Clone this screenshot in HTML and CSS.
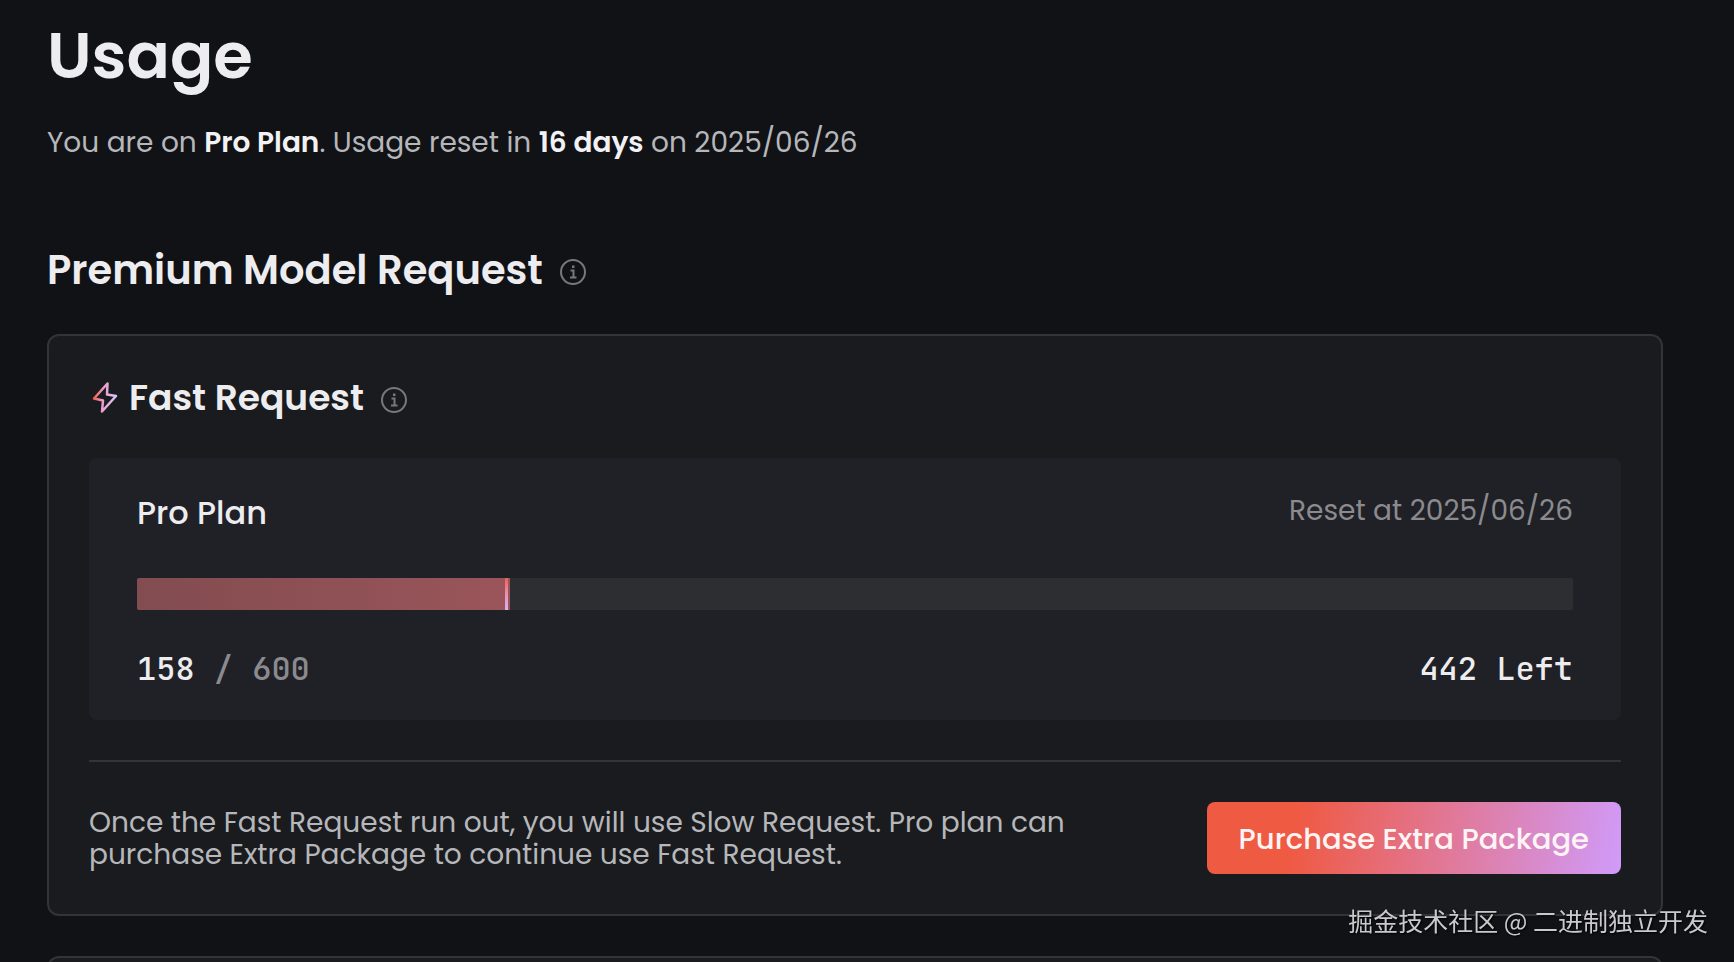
FILE: index.html
```
<!DOCTYPE html>
<html lang="en">
<head>
	<meta charset="utf-8">
	<meta name="viewport" content="width=device-width, initial-scale=1">
	<title>Usage</title>
	<link rel="stylesheet" href="styles.css">
</head>
<body>
	<main class="page">
		<h1 class="title">Usage</h1>
		<p class="summary">You are on <strong>Pro Plan</strong>. Usage reset in <strong>16 days</strong> on 2025/06/26</p>

		<div class="section-head">
			<h2>Premium Model Request</h2>
			<svg class="info" viewBox="0 0 28 28" aria-hidden="true">
				<circle cx="14" cy="14" r="12"/>
				<path d="M11.5 12.5h3v6.500M11 19.500h6.500"/>
				<path class="dot" d="M13 7.500h2.500v2.500H13z"/>
			</svg>
		</div>

		<section class="card">
			<div class="card-head">
				<svg class="bolt" viewBox="0 0 32 40" aria-hidden="true">
					<defs>
						<linearGradient id="bolt-color" x1="0" y1="0.4" x2="1" y2="0.5">
							<stop offset="0" stop-color="#f2604a"/>
							<stop offset="0.4" stop-color="#ea9ccb"/>
							<stop offset="1" stop-color="#d9c6fa"/>
						</linearGradient>
					</defs>
					<path d="M18.500 5.500L5 20.500L14 22.500L13 33.500L27 18L18 16.500Z"/>
				</svg>
				<h3>Fast Request</h3>
				<svg class="info" viewBox="0 0 28 28" aria-hidden="true">
					<circle cx="14" cy="14" r="12"/>
					<path d="M11.5 12.5h3v6.500M11 19.500h6.500"/>
					<path class="dot" d="M13 7.500h2.500v2.500H13z"/>
				</svg>
			</div>

			<div class="plan">
				<div class="row">
					<h4>Pro Plan</h4>
					<span class="reset">Reset at 2025/06/26</span>
				</div>
				<div class="bar">
					<div class="bar-fill" style="width: 26%"></div>
				</div>
				<div class="row count">
					<span>158 <span class="total">/ 600</span></span>
					<span>442 Left</span>
				</div>
			</div>

			<div class="card-foot">
				<p>Once the Fast Request run out, you will use Slow Request. Pro plan can purchase Extra Package to continue use Fast Request.</p>
				<button type="button" class="buy">Purchase Extra Package</button>
			</div>
		</section>

		<section class="card"></section>
	</main>
	<div class="watermark" lang="zh">掘金技术社区 @ 二进制独立开发</div>
</body>
</html>
```
FILE: styles.css
```
* {
	box-sizing: border-box;
}
html {
	height: 100%;
	overflow: hidden;
}
body {
	height: 100%;
	margin: 0;
	overflow: hidden;
	background: #111216;
	color: #ededf0;
	font-family: Poppins, Inter, "Noto Sans CJK SC", sans-serif;
	font-size: 28px;
	line-height: 42px;
}
h1, h2, h3, h4, p {
	margin: 0;
}
.page {
	padding: 16px 71px 0 47px;
}

/* headings */
.title {
	font-size: 64px;
	font-weight: 600;
	line-height: 80px;
}
.summary {
	margin-top: 26px;
	color: #b6b7bb;
}
.summary strong {
	color: #f2f2f5;
	font-weight: 600;
}
.section-head,
.card-head {
	display: flex;
	align-items: center;
}
.section-head {
	margin: 82px 0 40px;
}
.section-head h2 {
	font-size: 40px;
	font-weight: 600;
	line-height: 48px;
}
.info {
	width: 28px;
	height: 28px;
	margin: 3px 0 0 16px;
	fill: none;
	stroke: #77787b;
	stroke-width: 2;
}
.info .dot {
	fill: #77787b;
	stroke: none;
}

/* cards */
.card {
	margin-bottom: 40px;
	padding: 40px;
	border: 2px solid #333437;
	border-radius: 12px;
	background: #1a1b1e;
}
.card-head h3 {
	font-size: 36px;
	font-weight: 600;
	line-height: 44px;
}
.bolt {
	width: 32px;
	height: 40px;
	margin-right: 8px;
	fill: none;
	stroke: url(#bolt-color);
	stroke-width: 2.5;
	stroke-linejoin: round;
}
.plan {
	margin: 38px 0 40px;
	padding: 32px 48px;
	border-radius: 8px;
	background: #202027;
}
.row {
	display: flex;
	justify-content: space-between;
	align-items: flex-start;
}
.row h4 {
	font-size: 32px;
	font-weight: 500;
	line-height: 46px;
}
.reset {
	color: #8b8b8e;
}
.bar {
	height: 32px;
	margin: 42px 0 40px;
	border-radius: 2px;
	background: #2d2e31;
	overflow: hidden;
}
.bar-fill {
	display: flex;
	justify-content: flex-end;
	height: 100%;
	padding-right: 2px;
	background: linear-gradient(90deg, #824c50, #9a555a);
}
.bar-fill::after {
	content: "";
	width: 3px;
	background: linear-gradient(#f0605a, #ea90b0 50%, #d3b4f5);
}
.count {
	font-family: "JetBrains Mono", "DejaVu Sans Mono", monospace;
	font-size: 32px;
	font-weight: 500;
	line-height: 38px;
}
.total {
	color: #8b8b8e;
}
.card-foot {
	display: flex;
	justify-content: space-between;
	align-items: center;
	padding-top: 40px;
	border-top: 2px solid #333437;
}
.card-foot p {
	max-width: 1020px;
	padding-top: 2px;
	color: #b6b7bb;
	line-height: 32px;
}
.buy {
	height: 72px;
	padding: 2px 32px 0;
	border: 0;
	border-radius: 8px;
	background: linear-gradient(100deg, #ef5a43 22%, #d09bfa);
	color: #fff4f4;
	font: 500 29px/40px Poppins, Inter, sans-serif;
	white-space: nowrap;
	cursor: pointer;
}

.watermark {
	position: fixed;
	right: 26px;
	bottom: 21px;
	color: #c9c9cb;
	font-family: "Noto Sans CJK SC", sans-serif;
	font-size: 25px;
	text-shadow: 1px 1px 2px #000;
}
```
